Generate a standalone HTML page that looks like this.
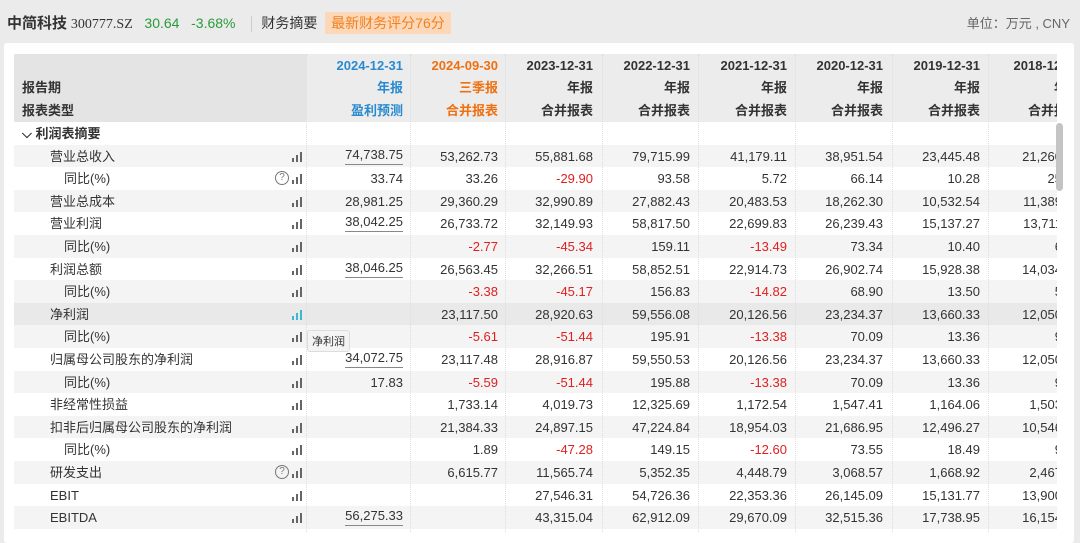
<html><head><style>
body{margin:0;width:1080px;height:532px;background:#ebebeb;font-family:"Liberation Sans","Noto Sans CJK SC",sans-serif;overflow:hidden;position:relative;color:#333}
.top{position:absolute;top:12px;left:7px;font-size:14px;white-space:nowrap}
.card{position:absolute;left:4px;top:43px;width:1070px;height:500px;background:#fff;border-radius:3px}
.tb{position:absolute;left:14px;top:54px;width:1043px;height:478px;overflow:hidden}
.r{position:absolute;left:0;width:1100px;height:23px;font-size:13px;line-height:23px}
.c{position:absolute;text-align:right;width:90px}
.ic{position:absolute;left:278px;top:7px;width:12px;height:10px}
.ic i{position:absolute;bottom:0;width:2px;background:#666}
.q{position:absolute;left:261px;top:4px;width:12px;height:12px;border:1px solid #777;border-radius:50%;font-size:10px;line-height:12px;text-align:center;color:#777}
.red{color:#e02020}
.u{border-bottom:1px solid #888;line-height:19px;display:inline-block}
.vl{position:absolute;top:0;height:478px;border-left:1px dotted #ddd}
</style></head><body>
<div class="top"><b style="font-size:15px">中简科技</b> <span style="font-family:'Liberation Serif',serif">300777.SZ</span>&nbsp;&nbsp;&nbsp;<span style="color:#2a9a3a">30.64&nbsp;&nbsp;&nbsp;-3.68%</span>
<span style="display:inline-block;width:1px;height:16px;background:#ccc;vertical-align:middle;margin:0 9px 0 12px"></span>财务摘要&nbsp;&nbsp;<span style="background:#fcd8b8;color:#f08020;padding:3px 6px">最新财务评分76分</span></div>
<div style="position:absolute;right:10px;top:13px;font-size:13px;color:#666">单位：万元 , CNY</div>
<div class="card"></div>
<div class="tb" id="t"></div>
<div style="position:absolute;left:1056px;top:123px;width:7px;height:68px;background:#c4c4c4;border-radius:4px"></div>
<div style="position:absolute;left:307px;top:330px;background:#f4f4f4;border:1px solid #ddd;border-radius:3px;font-size:11px;padding:2px 4px;color:#333">净利润</div>
<script>
var R=[403,498,593,690,787,883,980,1080];
var t=document.getElementById('t'),h='';
h+='<div style="position:absolute;left:0;top:0;width:1100px;height:68px;background:#ececec"></div><div style="position:absolute;left:0;top:0;width:292px;height:68px;background:#e4e4e4"></div>';
var d=['2024-12-31','2024-09-30','2023-12-31','2022-12-31','2021-12-31','2020-12-31','2019-12-31','2018-12-31'];
var y2=['年报','三季报','年报','年报','年报','年报','年报','年报'];
var y3=['盈利预测','合并报表','合并报表','合并报表','合并报表','合并报表','合并报表','合并报表'];
for(var i=0;i<8;i++){var col=i==0?'#2a8ad0':i==1?'#f07010':'#333';var x=R[i]-14-100;
h+='<div class="r" style="top:0;font-weight:bold;color:'+col+'"><div class="c" style="left:'+x+'px;width:100px">'+d[i]+'</div></div>';
h+='<div class="r" style="top:22px;font-weight:bold;color:'+col+'"><div class="c" style="left:'+x+'px;width:100px">'+y2[i]+'</div></div>';
h+='<div class="r" style="top:45px;font-weight:bold;color:'+col+'"><div class="c" style="left:'+x+'px;width:100px">'+y3[i]+'</div></div>';}
h+='<div class="r" style="top:22px;font-weight:bold"><span style="position:absolute;left:8px">报告期</span></div><div class="r" style="top:45px;font-weight:bold"><span style="position:absolute;left:8px">报表类型</span></div>';
h+='<div class="r" style="top:68px;font-weight:bold"><span style="position:absolute;left:8px">⌵ 利润表摘要</span></div>';
var rows=[
['营业总收入',0,0,['u74,738.75','53,262.73','55,881.68','79,715.99','41,179.11','38,951.54','23,445.48','21,260.44']],
['同比(%)',1,1,['33.74','33.26','-29.90','93.58','5.72','66.14','10.28','25.52']],
['营业总成本',0,0,['28,981.25','29,360.29','32,990.89','27,882.43','20,483.53','18,262.30','10,532.54','11,389.51']],
['营业利润',0,0,['u38,042.25','26,733.72','32,149.93','58,817.50','22,699.83','26,239.43','15,137.27','13,711.31']],
['同比(%)',1,0,['','-2.77','-45.34','159.11','-13.49','73.34','10.40','6.25']],
['利润总额',0,0,['u38,046.25','26,563.45','32,266.51','58,852.51','22,914.73','26,902.74','15,928.38','14,034.34']],
['同比(%)',1,0,['','-3.38','-45.17','156.83','-14.82','68.90','13.50','5.22']],
['净利润',0,0,['','23,117.50','28,920.63','59,556.08','20,126.56','23,234.37','13,660.33','12,050.15']],
['同比(%)',1,0,['','-5.61','-51.44','195.91','-13.38','70.09','13.36','9.36']],
['归属母公司股东的净利润',0,0,['u34,072.75','23,117.48','28,916.87','59,550.53','20,126.56','23,234.37','13,660.33','12,050.15']],
['同比(%)',1,0,['17.83','-5.59','-51.44','195.88','-13.38','70.09','13.36','9.36']],
['非经常性损益',0,0,['','1,733.14','4,019.73','12,325.69','1,172.54','1,547.41','1,164.06','1,503.34']],
['扣非后归属母公司股东的净利润',0,0,['','21,384.33','24,897.15','47,224.84','18,954.03','21,686.95','12,496.27','10,546.81']],
['同比(%)',1,0,['','1.89','-47.28','149.15','-12.60','73.55','18.49','9.47']],
['研发支出',0,1,['','6,615.77','11,565.74','5,352.35','4,448.79','3,068.57','1,668.92','2,467.57']],
['EBIT',0,0,['','','27,546.31','54,726.36','22,353.36','26,145.09','15,131.77','13,900.42']],
['EBITDA',0,0,['u56,275.33','','43,315.04','62,912.09','29,670.09','32,515.36','17,738.95','16,154.24']]];
for(var k=0;k<rows.length;k++){var r=rows[k],yy=90.5+k*22.6;
var bg=k==7?'#e9e9e9':(k%2==0?'#f4f4f4':'#fff');
h+='<div class="r" style="top:'+yy+'px;background:'+bg+'"><span style="position:absolute;left:'+(r[1]?50:36)+'px">'+r[0]+'</span>';
if(r[2])h+='<span class="q">?</span>';
var ic=k==7?'#3bb8d0':'#666';
h+='<span class="ic"><i style="left:0;height:4px;background:'+ic+'"></i><i style="left:4px;height:7px;background:'+ic+'"></i><i style="left:8px;height:10px;background:'+ic+'"></i></span>';
for(var i=0;i<8;i++){var v=r[3][i]||'';var cls='';
if(v[0]=='u'){v='<span class="u">'+v.slice(1)+'</span>';}
else if(v[0]=='-')cls='red';
h+='<div class="c '+cls+'" style="left:'+(R[i]-14-90)+'px">'+v+'</div>';}
h+='</div>';}
var V=[292,396,491,588,684,781,878,974];
for(var i=0;i<V.length;i++)h+='<div class="vl" style="left:'+V[i]+'px"></div>';
t.innerHTML=h;
</script>
</body></html>
